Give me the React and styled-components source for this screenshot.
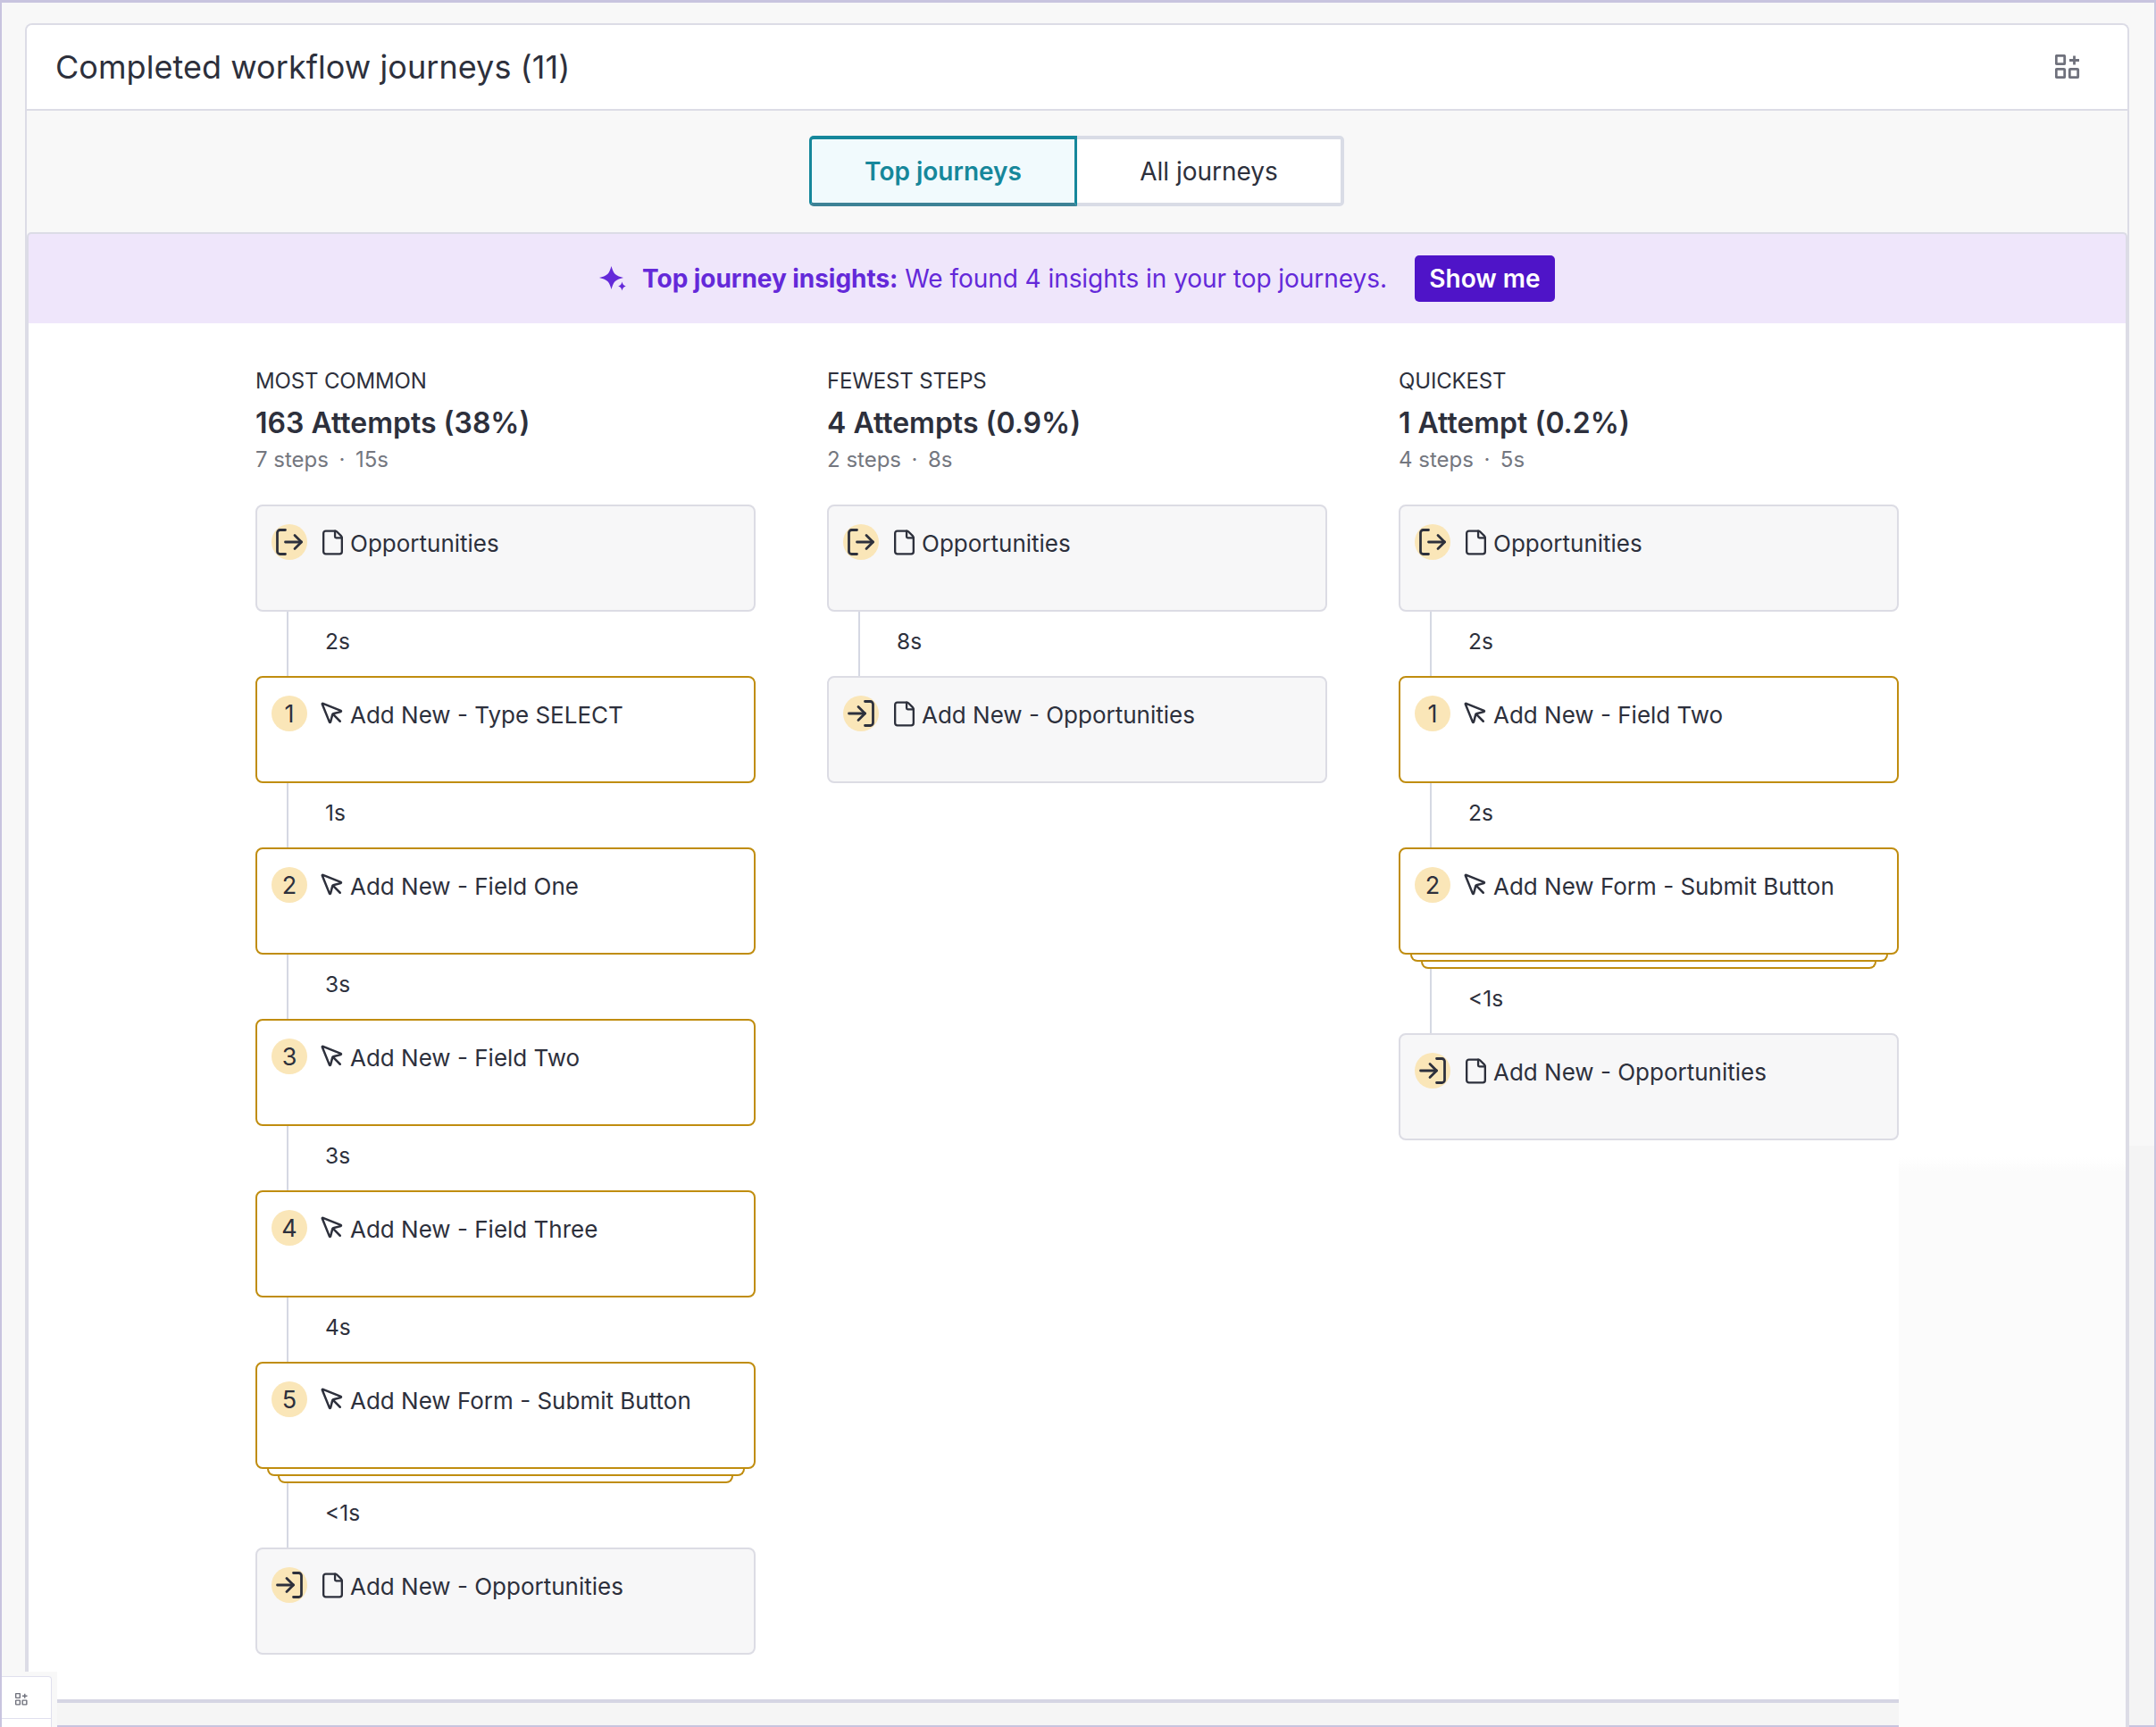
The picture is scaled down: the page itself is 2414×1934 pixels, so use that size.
import React from "react";
import styled, { createGlobalStyle } from "styled-components";
import { File, LogIn, LogOut, MousePointer } from "lucide-react";

const GlobalStyle = createGlobalStyle`
  html, body { margin: 0; padding: 0; background: #f8f8f8; }
  * { box-sizing: border-box; }
  body { font-family: "Inter", "Liberation Sans", sans-serif; color: #2d303c; }
`;

const columns = [
  {
    label: "MOST COMMON",
    attempts: "163 Attempts (38%)",
    meta: ["7 steps", "15s"],
    steps: [
      { kind: "start", name: "Opportunities", after: "2s" },
      { n: 1, name: "Add New - Type SELECT", after: "1s" },
      { n: 2, name: "Add New - Field One", after: "3s" },
      { n: 3, name: "Add New - Field Two", after: "3s" },
      { n: 4, name: "Add New - Field Three", after: "4s" },
      { n: 5, name: "Add New Form - Submit Button", after: "<1s", stacked: true },
      { kind: "end", name: "Add New - Opportunities" },
    ],
  },
  {
    label: "FEWEST STEPS",
    attempts: "4 Attempts (0.9%)",
    meta: ["2 steps", "8s"],
    steps: [
      { kind: "start", name: "Opportunities", after: "8s" },
      { kind: "end", name: "Add New - Opportunities" },
    ],
  },
  {
    label: "QUICKEST",
    attempts: "1 Attempt (0.2%)",
    meta: ["4 steps", "5s"],
    steps: [
      { kind: "start", name: "Opportunities", after: "2s" },
      { n: 1, name: "Add New - Field Two", after: "2s" },
      { n: 2, name: "Add New Form - Submit Button", after: "<1s", stacked: true },
      { kind: "end", name: "Add New - Opportunities" },
    ],
  },
];

function WidgetIcon({ size }) {
  return (
    <svg width={size} height={size} viewBox="0 0 28 28" fill="none" stroke="#6f717c" strokeWidth="2.8">
      <rect x="1.3" y="1.3" width="9.4" height="9.4" rx="0.8" />
      <rect x="1.3" y="16.3" width="9.4" height="9.4" rx="0.8" />
      <rect x="16.3" y="16.3" width="9.4" height="9.4" rx="0.8" />
      <path d="M21.500 1.500v10M16 6.500h11" />
    </svg>
  );
}

function Sparkle() {
  return (
    <svg width="30" height="28" viewBox="0 0 30 28" fill="#6429d9">
      <path d="M13.500 0C14.500 3.500 15.500 6.500 17.500 8.800 20 11 23.500 12.200 27 13 23.500 13.800 20 15 17.500 17.200 15.500 19.500 14.500 22.500 13.500 26 12.500 22.500 11.500 19.500 9.500 17.200 7 15 3.500 13.800 0 13 3.500 12.200 7 11 9.500 8.800 11.500 6.500 12.500 3.500 13.500 0z" />
      <path d="M25.500 17.500c.6 2.800 1.600 3.900 4.300 5-2.700 1-3.700 2.200-4.300 5-.6-2.800-1.600-4-4.300-5 2.700-1.100 3.700-2.200 4.300-5z" />
    </svg>
  );
}

function Step({ step }) {
  const terminal = Boolean(step.kind);
  return (
    <>
      <Card $terminal={terminal}>
        <Badge>
          {step.kind === "start" && <LogOut size={36} strokeWidth={1.85} />}
          {step.kind === "end" && <LogIn size={36} strokeWidth={1.85} />}
          {!terminal && step.n}
        </Badge>
        <StepIcon>
          {terminal ? <File size={31} strokeWidth={1.8} /> : <MousePointer size={30} strokeWidth={2} />}
        </StepIcon>
        <StepName>{step.name}</StepName>
      </Card>
      {step.stacked && (
        <>
          <StackEdge $left={13} $right={12} />
          <StackEdge $left={25} $right={25} />
        </>
      )}
      {step.after && <Connector>{step.after}</Connector>}
    </>
  );
}

export default function App() {
  return (
    <Page>
      <GlobalStyle />
      <Panel>
        <Header>
          <Title>Completed workflow journeys (11)</Title>
          <WidgetIcon size={28} />
        </Header>
        <TabBar>
          <Tab $active>Top journeys</Tab>
          <Tab>All journeys</Tab>
        </TabBar>
        <Insights>
          <Sparkle />
          <InsightText>
            <strong>Top journey insights:</strong> We found 4 insights in your top journeys.
          </InsightText>
          <ShowMe>Show me</ShowMe>
        </Insights>
        <Body>
          <Columns>
            {columns.map((col) => (
              <Column key={col.label}>
                <Label>{col.label}</Label>
                <Attempts>{col.attempts}</Attempts>
                <Meta>
                  {col.meta[0]}
                  <Dot>·</Dot>
                  {col.meta[1]}
                </Meta>
                {col.steps.map((step) => (
                  <Step key={step.name + (step.n || "")} step={step} />
                ))}
              </Column>
            ))}
          </Columns>
          <NextSection />
          <FadedCorner />
        </Body>
      </Panel>
      <Dock>
        <DockCell>
          <WidgetIcon size={14} />
        </DockCell>
      </Dock>
    </Page>
  );
}

const Page = styled.div`
  position: relative;
  width: 2414px;
  height: 1934px;
  overflow: hidden;
  background: #f8f8f8;
  border: 2px solid #c8c4df;
  border-top-width: 3px;
  border-bottom: none;
  padding: 23px 28px 0 26px;

  /* right gutter gets a shade darker further down the page */
  &::after {
    content: "";
    position: absolute;
    right: 0;
    top: 1280px;
    bottom: 0;
    width: 28px;
    background: #f4f4f4;
    border-bottom: 2px solid #c8c4df;
  }
`;

const Panel = styled.div`
  height: 1908px;
  display: flex;
  flex-direction: column;
  border: 2px solid #dcdce6;
  border-bottom: none;
  border-radius: 8px 8px 0 0;
`;

const Header = styled.header`
  flex: none;
  height: 96px;
  background: #fff;
  border-bottom: 2px solid #dcdce6;
  border-radius: 6px 6px 0 0;
  display: flex;
  align-items: center;
  justify-content: space-between;
  padding: 0 53px 0 32px;
`;

const Title = styled.h2`
  margin: 0;
  font-size: 36px;
  font-weight: 400;
  line-height: 44px;
  letter-spacing: 0.05px;
  color: #2d303c;
`;

const TabBar = styled.div`
  flex: none;
  height: 136px;
  display: flex;
  justify-content: center;
  align-items: flex-start;
  padding: 28px 1px 0 0;
`;

const Tab = styled.div`
  width: ${(p) => (p.$active ? "300px" : "299px")};
  height: 79px;
  display: flex;
  align-items: center;
  justify-content: center;
  font-size: 28px;
  font-weight: ${(p) => (p.$active ? 600 : 400)};
  color: ${(p) => (p.$active ? "#16879b" : "#2d303c")};
  background: ${(p) => (p.$active ? "#f1fafd" : "#fff")};
  border: 4px solid ${(p) => (p.$active ? "#16879b" : "#d9dce6")};
  border-bottom-color: ${(p) => (p.$active ? "#3d8296" : "#d9dce6")};
  border-left-width: ${(p) => (p.$active ? "3px" : "0")};
  border-right-width: ${(p) => (p.$active ? "3px" : "4px")};
  border-radius: ${(p) => (p.$active ? "5px 0 0 5px" : "0 5px 5px 0")};
`;

const Insights = styled.div`
  flex: none;
  height: 102px;
  background: #efe6fb;
  border-top: 2px solid #dcdce6;
  border-left: 2px solid #dcdce6;
  border-right: 2px solid #dcdce6;
  border-radius: 5px 5px 0 0;
  display: flex;
  align-items: center;
  justify-content: center;
`;

const InsightText = styled.span`
  margin-left: 18px;
  font-size: 28px;
  color: #6429d9;
  letter-spacing: -0.05px;
  strong { font-weight: 700; }
`;

const ShowMe = styled.button`
  margin-left: 31px;
  width: 157px;
  height: 52px;
  border: none;
  border-radius: 5px;
  background: #4f14c8;
  color: #fff;
  font-family: inherit;
  font-size: 28px;
  font-weight: 600;
  padding: 0;
`;

const Body = styled.main`
  position: relative;
  flex: 1;
  min-height: 0;
  background: #fff;
  border-left: 2px solid #dcdce6;
  border-right: 2px solid #dcdce6;
  display: flex;
  flex-direction: column;
  align-items: flex-start;
`;

const Columns = styled.div`
  flex: 1;
  width: 100%;
  display: grid;
  grid-template-columns: repeat(3, 560px);
  column-gap: 80px;
  justify-content: center;
  padding: 48px 0 0 0;
`;

const Column = styled.section`
  min-width: 0;
`;

const Label = styled.div`
  font-size: 24px;
  line-height: 34px;
  letter-spacing: -0.15px;
  color: #2d303c;
`;

const Attempts = styled.div`
  margin-top: 10px;
  font-size: 32px;
  font-weight: 600;
  line-height: 40px;
  color: #2d303c;
`;

const Meta = styled.div`
  margin-top: 5px;
  margin-bottom: 34px;
  font-size: 24px;
  line-height: 32px;
  color: #74777f;
`;

const Dot = styled.span`
  margin: 0 11.5px;
`;

const Card = styled.div`
  height: 120px;
  display: flex;
  align-items: flex-start;
  padding: 20px 16px;
  border: 2px solid ${(p) => (p.$terminal ? "#dcdce4" : "#c08d0f")};
  border-radius: 8px;
  background: ${(p) => (p.$terminal ? "#f7f7f8" : "#fff")};
`;

const Badge = styled.div`
  flex: none;
  width: 40px;
  height: 40px;
  border-radius: 50%;
  background: #fae6b8;
  display: flex;
  align-items: center;
  justify-content: center;
  font-size: 27px;
  color: #2d303c;
`;

const StepIcon = styled.div`
  flex: none;
  width: 35px;
  height: 40px;
  margin-left: 13px;
  display: flex;
  align-items: center;
  justify-content: flex-start;
`;

const StepName = styled.div`
  height: 40px;
  padding-top: 2px;
  display: flex;
  align-items: center;
  font-size: 26px;
  color: #2d303c;
`;

const StackEdge = styled.div`
  height: 8px;
  margin: 0 ${(p) => p.$right}px 0 ${(p) => p.$left}px;
  border: 2px solid #c08d0f;
  border-top: none;
  border-radius: 0 0 8px 8px;
`;

const Connector = styled.div`
  height: 72px;
  margin-left: 35px;
  padding: 0 0 6px 41px;
  border-left: 2px solid #d5d8e3;
  display: flex;
  align-items: center;
  font-size: 24.5px;
  color: #2d303c;
`;

const NextSection = styled.div`
  flex: none;
  width: 2094px;
  height: 31px;
  background: #f5f5f5;
  border-top: 4px solid #d5d5e3;
  border-bottom: 2px solid #c8c4df;
`;

const FadedCorner = styled.div`
  position: absolute;
  right: 0;
  top: 934px;
  bottom: 0;
  width: 254px;
  background: linear-gradient(#fff, #fbfbfb 16px);
`;

const Dock = styled.div`
  position: absolute;
  left: -2px;
  bottom: 0;
  width: 64px;
  height: 62px;
  padding: 5px 6px 0 0;
  background: #f8f8f8;
`;

const DockCell = styled.div`
  position: relative;
  height: 100%;
  background: #fff;
  border: 1px solid #e0e0ee;
  border-left: none;
  border-bottom: none;
  border-radius: 0 4px 0 0;
  padding: 16px 0 0 17px;

  &::after {
    content: "";
    position: absolute;
    left: 0;
    right: 0;
    bottom: 9px;
    border-bottom: 1px solid #e0e0ee;
  }
`;
